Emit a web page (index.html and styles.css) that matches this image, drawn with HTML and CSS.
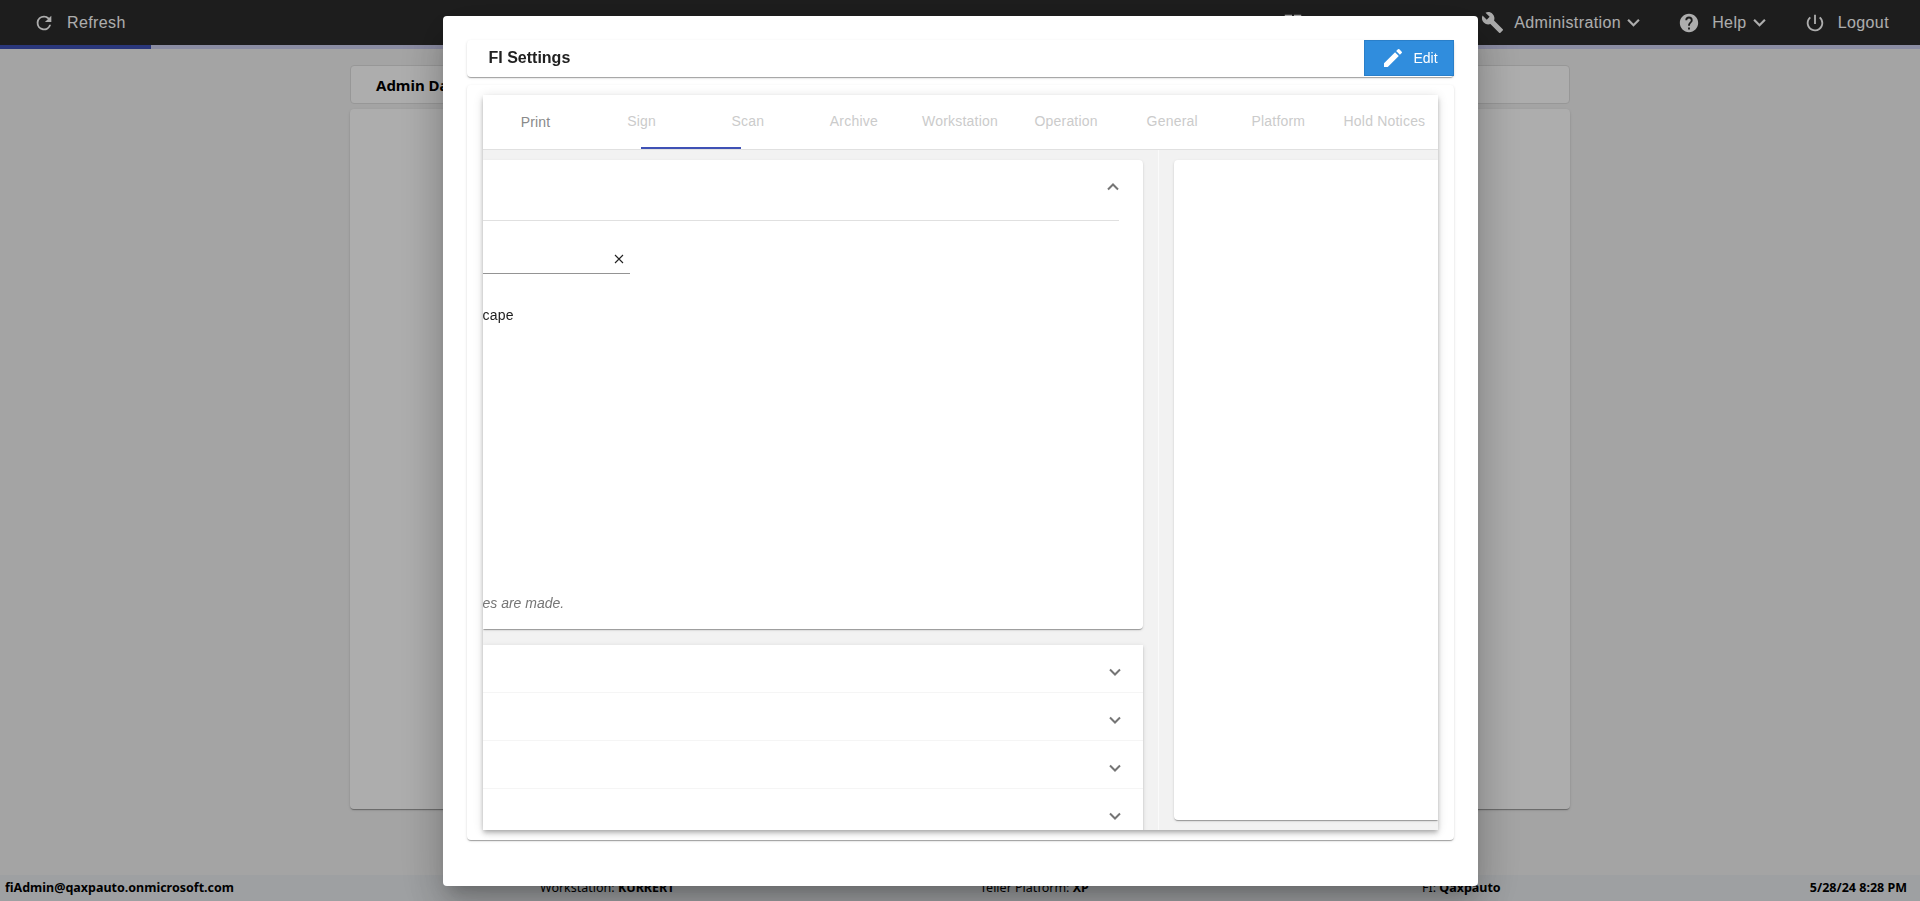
FILE: index.html
```
<!DOCTYPE html>
<html lang="en">

<head>
    <meta charset="UTF-8">
    <meta name="viewport" content="width=device-width, initial-scale=1.0">
    <title>FI Settings</title>
    <link rel="stylesheet" href="styles.css">
</head>

<body>

    <div class="page">
        <nav class="topbar">
            <a class="nav-item">
                <svg class="icon" viewBox="0 0 24 24"><path d="M17.65 6.35A7.96 7.96 0 0 0 12 4a8 8 0 1 0 7.73 10h-2.08A6 6 0 1 1 12 6c1.66 0 3.14.69 4.22 1.78L13 11h7V4z"/></svg>
                <span class="label">Refresh</span>
            </a>
            <div class="nav-right">
                <a class="nav-item dashboard">
                    <svg class="icon" viewBox="0 0 24 24"><path d="M3 13h8V3H3zm0 8h8v-6H3zm10 0h8V11h-8zm0-18v6h8V3z"/></svg>
                </a>
                <a class="nav-item administration">
                    <svg class="icon" viewBox="0 0 24 24"><path d="M22.7 19l-9.1-9.1c.9-2.3.4-5-1.5-6.9-2-2-5-2.4-7.4-1.3L9 6 6 9 1.6 4.7C.4 7.1.9 10.1 2.9 12.1c1.9 1.9 4.6 2.4 6.9 1.5l9.1 9.1c.4.4 1 .4 1.4 0l2.3-2.3c.5-.4.5-1.1.1-1.4z"/></svg>
                    <span class="label">Administration</span>
                    <svg class="caret" viewBox="0 0 12 8"><path d="M1 1.5l5 5 5-5"/></svg>
                </a>
                <a class="nav-item help">
                    <svg class="icon" viewBox="0 0 24 24"><path d="M12 2C6.48 2 2 6.48 2 12s4.48 10 10 10 10-4.48 10-10S17.52 2 12 2zm1 17h-2v-2h2zm2.07-7.75l-.9.92C13.45 12.9 13 13.5 13 15h-2v-.5c0-1.1.45-2.1 1.17-2.83l1.24-1.26c.37-.36.59-.86.59-1.41a2 2 0 1 0-4 0H8a4 4 0 1 1 8 0c0 .88-.36 1.68-.93 2.25z"/></svg>
                    <span class="label">Help</span>
                    <svg class="caret" viewBox="0 0 12 8"><path d="M1 1.5l5 5 5-5"/></svg>
                </a>
                <a class="nav-item logout">
                    <svg class="icon" viewBox="0 0 24 24"><path d="M13 3h-2v10h2zm4.83 2.17l-1.42 1.42A6.92 6.92 0 0 1 19 12a7 7 0 1 1-11.42-5.42L6.17 5.17A9 9 0 1 0 21 12c0-2.74-1.23-5.18-3.17-6.83z"/></svg>
                    <span class="label">Logout</span>
                </a>
            </div>
        </nav>
        <div class="progress"><div class="progress-bar"></div></div>

        <main class="dashboard-page">
            <div class="page-title">Admin Dashboard</div>
            <div class="page-card"></div>
        </main>

        <footer class="statusbar">
            <span class="user"><b>fiAdmin@qaxpauto.onmicrosoft.com</b></span>
            <span class="workstation">Workstation: <b>KURRERT</b></span>
            <span class="platform">Teller Platform: <b>XP</b></span>
            <span class="fi">FI: <b>Qaxpauto</b></span>
            <span class="date"><b>5/28/24 8:28 PM</b></span>
        </footer>
    </div>

    <div class="overlay">
        <div class="dialog">
            <div class="dialog-header">
                <h1>FI Settings</h1>
                <button class="edit-btn">
                    <svg viewBox="0 0 24 24"><path d="M3 17.25V21h3.75L17.81 9.94l-3.75-3.75zM20.71 7.04a1 1 0 0 0 0-1.41l-2.34-2.34a1 1 0 0 0-1.41 0l-1.83 1.83 3.75 3.75z"/></svg>
                    <span>Edit</span>
                </button>
            </div>
            <div class="dialog-card">
                <div class="settings">
                    <div class="tabs">
                        <div class="tab active">Print</div>
                        <div class="tab">Sign</div>
                        <div class="tab">Scan</div>
                        <div class="tab">Archive</div>
                        <div class="tab">Workstation</div>
                        <div class="tab">Operation</div>
                        <div class="tab">General</div>
                        <div class="tab">Platform</div>
                        <div class="tab">Hold Notices</div>
                        <div class="ink-bar"></div>
                    </div>
                    <div class="tab-body">
                        <div class="column-left">
                            <div class="panel open">
                                <div class="panel-head">
                                    <svg class="chevron" viewBox="0 0 12 8"><path d="M1 6.5l5-5 5 5"/></svg>
                                </div>
                                <div class="field">
                                    <svg class="clear" viewBox="0 0 10 10"><path d="M1 1l8 8M9 1L1 9"/></svg>
                                </div>
                                <div class="option">cape</div>
                                <div class="note">es are made.</div>
                            </div>
                            <div class="accordion">
                                <div class="row"><svg class="chevron" viewBox="0 0 12 8"><path d="M1 1.5l5 5 5-5"/></svg></div>
                                <div class="row"><svg class="chevron" viewBox="0 0 12 8"><path d="M1 1.5l5 5 5-5"/></svg></div>
                                <div class="row"><svg class="chevron" viewBox="0 0 12 8"><path d="M1 1.5l5 5 5-5"/></svg></div>
                                <div class="row"><svg class="chevron" viewBox="0 0 12 8"><path d="M1 1.5l5 5 5-5"/></svg></div>
                            </div>
                        </div>
                        <div class="column-right">
                            <div class="side-card"></div>
                        </div>
                    </div>
                </div>
            </div>
        </div>
    </div>

</body>

</html>
```

FILE: styles.css
```
* {
    box-sizing: border-box;
}

body {
    margin: 0;
    font-family: "Liberation Sans", Arial, sans-serif;
    font-size: 14px;
    overflow: hidden;
}

.page {
    display: flex;
    flex-direction: column;
    height: 100vh;
    background-color: #f2f2f2;
}

/* top navigation */
.topbar {
    display: flex;
    justify-content: space-between;
    height: 45px;
    padding: 0 31px 0 33px;
    background-color: #2c2c2c;
    color: #fff;
    font-size: 16px;
    letter-spacing: 0.4px;
}

.nav-right {
    display: flex;
}

.nav-item {
    display: flex;
    align-items: center;
}

.icon {
    width: 24px;
    height: 24px;
    fill: currentColor;
}

.nav-item .icon {
    width: 22px;
    height: 22px;
}

.nav-item .label {
    margin-left: 12px;
}

.caret {
    width: 13px;
    height: 9px;
    margin-left: 6px;
    fill: none;
    stroke: currentColor;
    stroke-width: 2;
}

.dashboard {
    margin-right: 177px;
}

.nav-item.administration .icon {
    width: 23px;
    height: 23px;
}

.administration .label {
    margin-left: 10px;
}

.help,
.logout {
    margin-left: 38px;
}

.progress {
    height: 4px;
    background-color: #ccceef;
}

.progress-bar {
    width: 151px;
    height: 4px;
    background-color: #3f51b5;
}

/* page behind the dialog */
.dashboard-page {
    flex: 1;
    width: 1220px;
    margin: 0 auto;
    padding-top: 16px;
}

.page-title {
    height: 39px;
    padding-left: 25px;
    border: 1px solid #dfdfdf;
    border-radius: 4px;
    background-color: #fff;
    font-family: "Noto Sans", "Open Sans", sans-serif;
    font-size: 15px;
    font-weight: bold;
    line-height: 38px;
}

.page-card {
    height: 700px;
    margin-top: 5px;
    border-radius: 4px;
    background-color: #fff;
    box-shadow: 0 2px 1px -1px rgba(0, 0, 0, .2), 0 1px 1px 0 rgba(0, 0, 0, .14), 0 1px 3px 0 rgba(0, 0, 0, .12);
}

.statusbar {
    display: flex;
    height: 26px;
    padding-left: 5px;
    background-color: #e9ecef;
    font-family: "Noto Sans", "Open Sans", sans-serif;
    font-size: 12.5px;
    line-height: 26px;
    white-space: nowrap;
}

.user {
    width: 535px;
}

.workstation {
    width: 440px;
}

.platform {
    width: 442px;
}

.date {
    margin-left: auto;
    margin-right: 13px;
}

/* dialog */
.overlay {
    position: fixed;
    inset: 0;
    padding-top: 16px;
    background-color: rgba(0, 0, 0, .32);
}

.dialog {
    width: 1035px;
    height: 870px;
    margin: 0 auto;
    padding: 24px;
    border-radius: 4px;
    background-color: #fff;
    box-shadow: 0 11px 15px -7px rgba(0, 0, 0, .2), 0 24px 38px 3px rgba(0, 0, 0, .14), 0 9px 46px 8px rgba(0, 0, 0, .12);
}

.dialog-header,
.dialog-card,
.panel,
.side-card {
    border-radius: 4px;
    background-color: #fff;
    box-shadow: 0 2px 1px -1px rgba(0, 0, 0, .2), 0 1px 1px 0 rgba(0, 0, 0, .14), 0 1px 3px 0 rgba(0, 0, 0, .12);
}

.dialog-header {
    display: flex;
    justify-content: space-between;
    height: 37px;
    padding-left: 22px;
}

.dialog-header h1 {
    margin: 0;
    color: #212121;
    font-size: 16px;
    line-height: 35px;
}

.edit-btn {
    display: flex;
    align-items: center;
    width: 90px;
    height: 36px;
    padding: 0 0 0 16px;
    border: 1px solid #2a7fc9;
    background-color: #308ddd;
    color: #fff;
    font-family: inherit;
    font-size: 14px;
}

.edit-btn svg {
    width: 24px;
    height: 24px;
    margin-right: 9px;
    fill: #fff;
}

.dialog-card {
    height: 755px;
    margin-top: 8px;
    padding: 10px 16px;
}

.settings {
    height: 735px;
    background-color: #f2f2f2;
    box-shadow: 0 2px 4px -1px rgba(0, 0, 0, .2), 0 4px 5px 0 rgba(0, 0, 0, .14), 0 1px 10px 0 rgba(0, 0, 0, .12);
}

.tabs {
    position: relative;
    display: flex;
    height: 55px;
    border-bottom: 1px solid #e0e0e0;
    background-color: #fff;
}

.tab {
    flex: 1 1 0;
    color: #cbcbcb;
    letter-spacing: 0.2px;
    line-height: 52px;
    text-align: center;
    white-space: nowrap;
}

.tab.active {
    color: #8a8a8a;
    line-height: 54px;
}

.ink-bar {
    position: absolute;
    bottom: 0;
    left: 158px;
    width: 100px;
    height: 2px;
    background-color: #3f51b5;
}

.tab-body {
    display: flex;
    height: 680px;
    overflow: hidden;
}

.column-left {
    width: 676px;
    padding: 10px 15px 0 0;
    border-right: 1px solid #fafafa;
}

.column-right {
    flex: 1;
    padding: 10px 0 0 15px;
}

.side-card {
    height: 660px;
    border-radius: 4px 0 0 4px;
}

.panel {
    height: 469px;
    border-radius: 0 4px 4px 0;
}

.panel-head {
    display: flex;
    justify-content: flex-end;
    height: 61px;
    margin-right: 24px;
    padding: 23px 0 0;
    border-bottom: 1px solid #e0e0e0;
}

.chevron {
    width: 12px;
    height: 8px;
    fill: none;
    stroke: #757575;
    stroke-width: 2;
}

.field {
    display: flex;
    justify-content: flex-end;
    width: 147px;
    height: 53px;
    padding: 33px 6px 0 0;
    border-bottom: 1px solid #949494;
}

.clear {
    width: 10px;
    height: 10px;
    stroke: #222;
    stroke-width: 1.1;
}

.option {
    margin-top: 33px;
    color: #212121;
    letter-spacing: 0.2px;
    line-height: 16px;
}

.note {
    margin-top: 272px;
    color: #757575;
    font-style: italic;
    line-height: 16px;
}

.accordion {
    margin-top: 16px;
    background-color: #fff;
    box-shadow: 0 3px 1px -2px rgba(0, 0, 0, .2), 0 2px 2px 0 rgba(0, 0, 0, .14), 0 1px 5px 0 rgba(0, 0, 0, .12);
}

.row {
    display: flex;
    align-items: center;
    justify-content: flex-end;
    height: 48px;
    padding: 6px 22px 0 0;
    border-bottom: 1px solid #f5f5f5;
}
```
